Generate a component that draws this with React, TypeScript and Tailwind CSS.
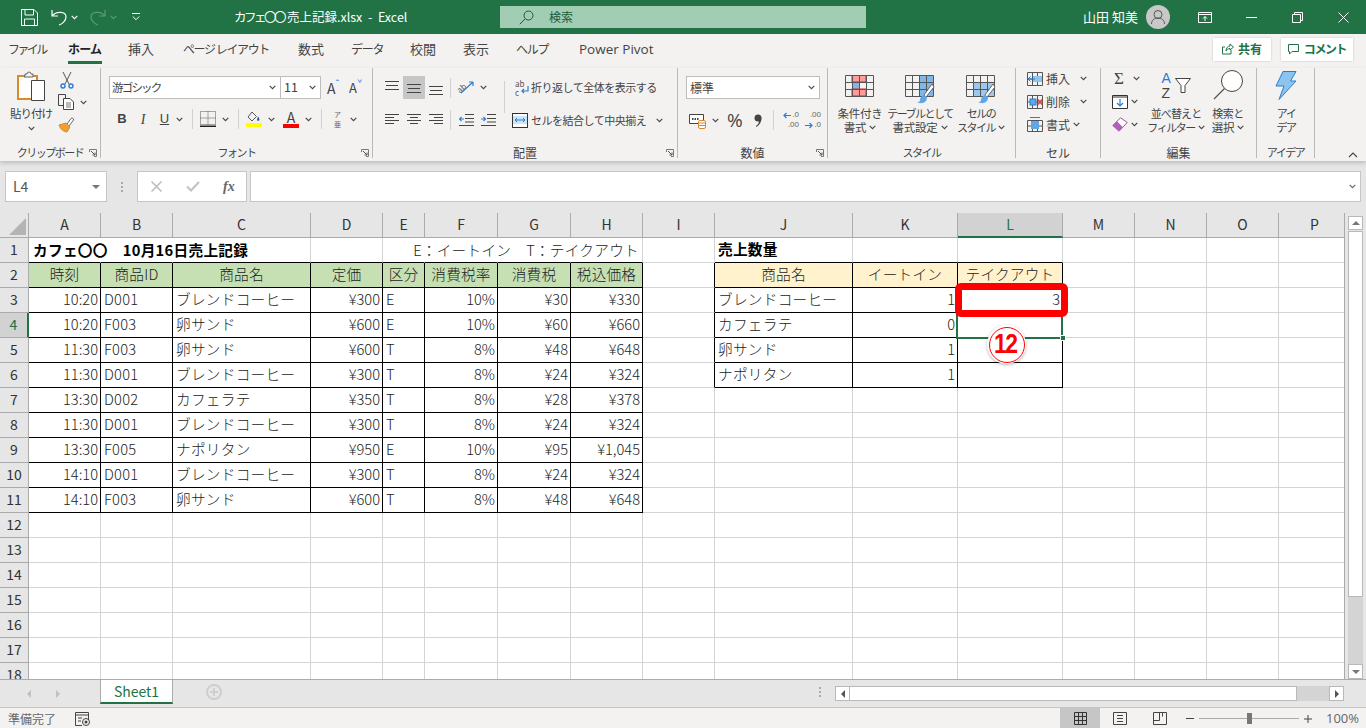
import type { ReactNode } from "react";

const UI = "font-['Noto_Sans_CJK_JP','Noto_Sans',sans-serif]";
const KANA = "text-[11px] tracking-[-1.5px]";
const KANJI = "text-[11.5px] tracking-[-0.2px]";

const Chev = ({ className = "", color = "#444" }: { className?: string; color?: string }) => (
  <svg width="7" height="5" viewBox="0 0 7 5" className={`shrink-0 ${className}`}>
    <path d="M.7.8 3.5 3.6 6.3.8" fill="none" stroke={color} strokeWidth="1.1" />
  </svg>
);

const Launcher = ({ className = "" }: { className?: string }) => (
  <svg width="8" height="8" viewBox="0 0 8 8" className={className}>
    <path d="M.5 3V.5H7.5V7.5H5" fill="none" stroke="#777" />
    <path d="M2 2 6 6M6 3.5V6H3.5" fill="none" stroke="#555" />
  </svg>
);

const VSep = ({ className = "" }: { className?: string }) => <div className={`w-px bg-[#d0d0d0] ${className}`} />;

// horizontal text-line alignment icons
const Lines = ({ rows }: { rows: [number, number, number][] }) => (
  <svg width="14" height="14" viewBox="0 0 14 14">
    {rows.map(([y, x, w], i) => (
      <rect key={i} x={x} y={y} width={w} height="1" fill="#444" />
    ))}
  </svg>
);

const Group = ({ w, label, kana, launcher, children }: { w: string; label: string; kana?: boolean; launcher?: boolean; children: ReactNode }) => (
  <div className={`${w} relative flex h-[90px] shrink-0 flex-col border-r border-[#b9b9b9]`}>
    <div className="h-[77px] shrink-0">{children}</div>
    <div className={`flex h-[15px] shrink-0 items-center justify-center leading-none text-[#444] ${kana ? KANA : "text-[12px]"}`}>{label}</div>
    {launcher && <Launcher className="absolute right-[3px] bottom-[1px]" />}
  </div>
);

const BigBtn = ({ w, icon, l1, l2, k1 = "", k2 = "", chev = true }: { w: string; icon: ReactNode; l1: string; l2: string; k1?: string; k2?: string; chev?: boolean }) => (
  <div className={`${w} flex shrink-0 flex-col items-center`}>
    <div className="flex h-[37px] items-end">{icon}</div>
    <div className="mt-[1px] flex flex-col items-center leading-[14px] whitespace-nowrap text-[#444]">
      <div className={k1}>{l1}</div>
      <div className="flex items-center justify-center gap-[3px]">
        <span className={k2}>{l2}</span>
        {chev && <Chev />}
      </div>
    </div>
  </div>
);

const StyleGridIcon = ({ fill, over }: { fill: ReactNode; over?: ReactNode }) => (
  <svg width="30" height="30" viewBox="0 0 30 30">
    {fill}
    <path d="M.5.5H28.500V21.500H.5ZM.5 7.500H28.500M.5 14.500H28.500M7.500.5V21.500M14.500.5V21.500M21.500.5V21.500" fill="none" stroke="#555" />
    {over}
  </svg>
);

const Brush = () => (
  <>
    <path d="M27 9 19 20l2 2 8-10Z" fill="#fff" stroke="#666" />
    <path d="M19 20c-3 1-4 3-4 5s-2 2-3 2c3 2 10 2 10-5Z" fill="#5ea6e6" />
  </>
);

const colWidths = [72, 72, 138, 72, 42, 73, 73, 72, 72, 138, 105, 105, 72, 72, 72, 72];
const colNames = "ABCDEFGHIJKLMNOP".split("");

type Cell = { t?: string; a?: "l" | "r" | "c"; bg?: string; b?: boolean; bold?: boolean };

const salesRows: string[][] = [
  ["10:20", "D001", "ブレンドコーヒー", "¥300", "E", "10%", "¥30", "¥330"],
  ["10:20", "F003", "卵サンド", "¥600", "E", "10%", "¥60", "¥660"],
  ["11:30", "F003", "卵サンド", "¥600", "T", "8%", "¥48", "¥648"],
  ["11:30", "D001", "ブレンドコーヒー", "¥300", "T", "8%", "¥24", "¥324"],
  ["13:30", "D002", "カフェラテ", "¥350", "T", "8%", "¥28", "¥378"],
  ["11:30", "D001", "ブレンドコーヒー", "¥300", "T", "8%", "¥24", "¥324"],
  ["13:30", "F005", "ナポリタン", "¥950", "E", "10%", "¥95", "¥1,045"],
  ["14:10", "D001", "ブレンドコーヒー", "¥300", "T", "8%", "¥24", "¥324"],
  ["14:10", "F003", "卵サンド", "¥600", "T", "8%", "¥48", "¥648"],
];
const salesHead = ["時刻", "商品ID", "商品名", "定価", "区分", "消費税率", "消費税", "税込価格"];
const sumRows: [string, string, string][] = [
  ["ブレンドコーヒー", "1", "3"],
  ["カフェラテ", "0", ""],
  ["卵サンド", "1", ""],
  ["ナポリタン", "1", ""],
];

// builds the cell map for the sheet: key = row index (0-based), col index
function cellAt(r: number, c: number): Cell {
  if (r === 1) {
    if (c <= 7) return { t: salesHead[c], a: "c", bg: "bg-[#c6e0b4]", b: true };
    if (c >= 9 && c <= 11) return { t: ["商品名", "イートイン", "テイクアウト"][c - 9], a: "c", bg: "bg-[#fff2cc]", b: true };
  }
  if (r >= 2 && r <= 10 && c <= 7) {
    const leftAligned = c === 1 || c === 2 || c === 4;
    return { t: salesRows[r - 2][c], a: leftAligned ? "l" : "r", b: true };
  }
  if (r >= 2 && r <= 5 && c >= 9 && c <= 11) {
    return { t: sumRows[r - 2][c - 9], a: c === 9 ? "l" : "r", b: true };
  }
  if (r === 0 && c === 9) return { t: "売上数量", a: "l", bold: true };
  return {};
}

const Row = ({ r }: { r: number }) => (
  <>
    <div
      className={`flex items-center justify-center border-b border-[#ababab] pb-px text-[14px] ${
        r === 3 ? "border-r-2 border-r-[#217346] bg-[#d2d2d2] text-[#217346]" : "border-r border-r-[#ababab] bg-[#e6e6e6] text-[#333]"
      }`}
    >
      {r + 1}
    </div>
    {colWidths.map((_, c) => {
      const cell = cellAt(r, c);
      const nb = cellAt(r, c + 1);
      const below = cellAt(r + 1, c);
      const rightLine = cell.b || nb.b ? "border-r-black" : r === 0 && c >= 4 && c <= 6 ? "border-r-white" : r === 0 && c < 2 ? "border-r-white" : "border-r-[#d4d4d4]";
      const bottomLine = cell.b || below.b ? "border-b-black" : "border-b-[#d4d4d4]";
      const align = cell.a === "r" ? "justify-end pr-[2px]" : cell.a === "c" ? "justify-center tracking-[0.2px]" : "pl-[3px] tracking-[0.25px]";
      return (
        <div
          key={c}
          className={`flex items-center overflow-visible border-r border-b pb-[2px] text-[14.67px] whitespace-nowrap ${rightLine} ${bottomLine} ${cell.bg ?? ""} ${align} ${
            cell.bold ? "font-bold text-black" : "font-light text-[#222]"
          }`}
        >
          {cell.t}
        </div>
      );
    })}
  </>
);

const Sheet = () => (
  <div className="relative grid h-[466px] auto-rows-[25px] grid-cols-[29px_72px_72px_138px_72px_42px_73px_73px_72px_72px_138px_105px_105px_72px_72px_72px_72px] overflow-hidden bg-white">
    {/* corner */}
    <div className="relative border-r border-b border-[#ababab] bg-[#e6e6e6]">
      <svg width="17" height="17" viewBox="0 0 17 17" className="absolute right-[2px] bottom-[2px]">
        <path d="M17 0V17H0Z" fill="#b4b4b4" />
      </svg>
    </div>
    {colNames.map((n) => (
      <div
        key={n}
        className={`flex items-center justify-center border-r pb-px text-[14px] ${
          n === "L" ? "border-b-2 border-[#ababab] border-b-[#217346] bg-[#d2d2d2] text-[#217346]" : "border-b border-[#ababab] bg-[#e6e6e6] text-[#333]"
        }`}
      >
        {n}
      </div>
    ))}
    {Array.from({ length: 18 }).map((_, r) => (
      <Row key={r} r={r} />
    ))}

    {/* text spilling across the cells of row 1 */}
    <div className="absolute top-[25px] left-[29px] flex h-[24px] w-[353px] items-center pl-[4px] text-[14.67px] font-bold tracking-[0.3px] whitespace-nowrap text-black">
      カフェ〇〇　10月16日売上記録
    </div>
    <div className="absolute top-[25px] left-[383px] flex h-[24px] w-[259px] items-center justify-end pr-[3px] text-[14.67px] font-light tracking-[0.25px] whitespace-nowrap text-[#222]">
      E：イートイン　T：テイクアウト
    </div>

    {/* selected cell L4 */}
    <div className="absolute top-[99px] left-[956px] h-[27px] w-[107px] border-2 border-[#217346]" />
    <div className="absolute top-[122px] left-[1060px] h-[6px] w-[6px] border border-white bg-[#217346]" />

    {/* red highlight + callout */}
    <div className="absolute top-[70px] left-[955px] h-[34px] w-[113px] rounded-[6px] border-[7px] border-[#ff0000]" />
    <div className="absolute top-[112px] left-[987px] flex h-[39px] w-[39px] items-center justify-center rounded-full bg-white shadow-[0_1px_3px_rgba(0,0,0,0.3)]">
      <div className="flex h-[36px] w-[36px] items-center justify-center rounded-full border border-[#f00] font-['Liberation_Sans',sans-serif] text-[27px] font-bold tracking-[-2px] text-[#f00]">
        <span className="scale-x-[0.85] pr-[2px]">12</span>
      </div>
    </div>
  </div>
);

const App = () => (
  <div className={`flex h-[728px] w-[1366px] flex-col overflow-hidden bg-[#e6e6e6] ${UI}`}>
    {/* title bar */}
    <div className="flex h-[34px] shrink-0 items-center bg-[#217346] text-white">
      <svg width="17" height="17" viewBox="0 0 17 17" className="ml-[21px]">
        <path d="M.5.5H13L16.500 4V16.500H.5ZM4 .5V6H12.500V.5M3.500 16.500V10H13.500V16.500" fill="none" stroke="#fff" />
      </svg>
      <svg width="16" height="17" viewBox="0 0 16 17" className="ml-[13px]">
        <path d="M1 1V7H7M1 7C5 2 15 2 15 8c0 4-4 7-7 8" fill="none" stroke="#fff" strokeWidth="1.2" />
      </svg>
      <Chev color="#fff" className="ml-[4px]" />
      <svg width="16" height="17" viewBox="0 0 16 17" className="ml-[12px]">
        <path d="M15 1V7H9M15 7C11 2 1 2 1 8c0 4 4 7 7 8" fill="none" stroke="#5d9a78" strokeWidth="1.2" />
      </svg>
      <Chev color="#5d9a78" className="ml-[4px]" />
      <svg width="8" height="8" viewBox="0 0 8 8" className="ml-[15px]">
        <path d="M0 .5H8M.8 3.500 4 6.700 7.200 3.500" fill="none" stroke="#fff" />
      </svg>
      <div className="ml-[94px] w-[266px] text-[12.5px] whitespace-nowrap">
        <span className="tracking-[-2.5px]">カフェ〇〇</span>
        <span className="ml-[3px]">売上記録.xlsx&nbsp; -&nbsp; Excel</span>
      </div>
      <div className="flex h-[22px] w-[366px] items-center bg-[#a0cdb3] text-[12px] text-[#1d5c3a]">
        <svg width="15" height="15" viewBox="0 0 15 15" className="ml-[19px]">
          <circle cx="9.5" cy="5.5" r="4.5" fill="none" stroke="#1d5c3a" />
          <path d="M6 9 .8 14.200" stroke="#1d5c3a" />
        </svg>
        <span className="ml-[15px]">検索</span>
      </div>
      <div className="ml-[217px] w-[52px] text-[13px] whitespace-nowrap">山田 知美</div>
      <div className="ml-[11px] flex h-[24px] w-[24px] items-center justify-center rounded-full bg-[#c8c8c8]">
        <svg width="16" height="16" viewBox="0 0 16 16">
          <circle cx="8" cy="5.5" r="4" fill="none" stroke="#555" />
          <path d="M1.500 15c0-4 3-6 6.500-6s6.500 2 6.500 6" fill="none" stroke="#555" />
        </svg>
      </div>
      <svg width="14" height="11" viewBox="0 0 14 11" className="ml-[28px]">
        <path d="M.5.5H13.500V10.500H.5ZM.5 2.500H13.500M7 9V4.500M5 6.500 7 4.500 9 6.500" fill="none" stroke="#fff" />
      </svg>
      <div className="ml-[34px] h-px w-[11px] bg-white" />
      <svg width="11" height="11" viewBox="0 0 11 11" className="ml-[35px]">
        <path d="M.5 2.500H8.500V10.500H.5ZM2.500 2.500V.5H10.500V8.500H8.500" fill="none" stroke="#fff" />
      </svg>
      <svg width="11" height="11" viewBox="0 0 11 11" className="ml-[35px]">
        <path d="M.5.5 10.500 10.500M10.500.5.5 10.500" fill="none" stroke="#fff" />
      </svg>
    </div>

    {/* tab row */}
    <div className="flex h-[34px] shrink-0 items-center bg-[#f3f2f1] pb-[4px] text-[13px] whitespace-nowrap text-[#444]">
      <span className="ml-[8px] w-[36px] text-[12px] tracking-[-2.6px]">ファイル</span>
      <span className="relative ml-[24px] w-[34px] text-[12px] font-bold tracking-[-0.8px] text-[#222]">
        ホーム
        <span className="absolute top-[21px] left-0 h-[3px] w-[34px] bg-[#217346]" />
      </span>
      <span className="ml-[26px] w-[26px]">挿入</span>
      <span className="ml-[29px] w-[86px] text-[12px] tracking-[-1.4px]">ページ レイアウト</span>
      <span className="ml-[29px] w-[26px]">数式</span>
      <span className="ml-[27px] w-[32px] text-[12px] tracking-[-1.2px]">データ</span>
      <span className="ml-[27px] w-[26px]">校閲</span>
      <span className="ml-[27px] w-[26px]">表示</span>
      <span className="ml-[27px] w-[32px] text-[12px] tracking-[-1.2px]">ヘルプ</span>
      <span className="ml-[31px] w-[75px] font-['Open_Sans',sans-serif] text-[13.5px]">Power Pivot</span>
      <div className="ml-[559px] flex h-[23px] w-[58px] items-center justify-center gap-[4px] bg-white text-[12px] font-bold text-[#217346] shadow-[0_0_2px_rgba(0,0,0,0.2)]">
        <svg width="12" height="12" viewBox="0 0 12 12">
          <path d="M9 7v4H.5V4H3M4 8c0-3 2-5 4-5V1l3.500 3L8 7V5.500C6 5.500 5 6.500 4 8Z" fill="none" stroke="#217346" />
        </svg>
        共有
      </div>
      <div className="ml-[10px] flex h-[23px] w-[72px] items-center justify-center gap-[5px] bg-white text-[12px] font-bold tracking-[-1.4px] text-[#217346] shadow-[0_0_2px_rgba(0,0,0,0.2)]">
        <svg width="11" height="11" viewBox="0 0 11 11">
          <path d="M.5.5H10.500V7.500H4L1.500 10V7.500H.5Z" fill="none" stroke="#217346" />
        </svg>
        コメント
      </div>
    </div>

    {/* ribbon */}
    <div className="relative flex h-[93px] shrink-0 bg-[#f3f2f1] shadow-[0_2px_4px_rgba(0,0,0,0.18)]">
      <Group w="w-[101px]" label="クリップボード" kana launcher>
        <div className="flex">
          <div className="ml-[10px] flex w-[42px] flex-col items-center leading-[14px] text-[#444]">
            <svg width="28" height="30" viewBox="0 0 28 30" className="mt-[3px]">
              <path d="M1 5H20V28H1Z" fill="#fff" stroke="#d98a2b" strokeWidth="2" />
              <path d="M8 5V3h2a2 2 0 0 1 4 0h2v3H7Z" fill="#f3f2f1" stroke="#666" />
              <path d="M14.500 9.500H27.500V29.500H14.500Z" fill="#fff" stroke="#444" />
            </svg>
            <span className="mt-[5px] text-[11.5px] tracking-[-1px] whitespace-nowrap">貼り付け</span>
            <Chev className="mt-[6px]" />
          </div>
          <div className="ml-[6px] flex flex-col">
            <svg width="16" height="17" viewBox="0 0 16 17" className="mt-[4px] ml-[1px]">
              <path d="M4 0 10 12M12 0 6 12" stroke="#555" fill="none" />
              <circle cx="4" cy="14" r="2" fill="none" stroke="#2b7cd3" strokeWidth="1.400" />
              <circle cx="12" cy="14" r="2" fill="none" stroke="#2b7cd3" strokeWidth="1.400" />
            </svg>
            <div className="mt-[5px] flex items-center gap-[5px]">
              <svg width="17" height="16" viewBox="0 0 17 16">
                <path d="M.5.500H7.500V11.500H.5Z" fill="none" stroke="#444" />
                <path d="M5.500 4.500H12L15.500 8V15.500H5.500Z" fill="#fff" stroke="#444" />
                <path d="M8 9H13M8 11H13M8 13H13" stroke="#777" />
              </svg>
              <Chev />
            </div>
            <svg width="17" height="16" viewBox="0 0 17 16" className="mt-[7px]">
              <path d="M9 7 13 1.500c1-1 3 0 2.500 1.500L11 9Z" fill="#fff" stroke="#666" />
              <path d="M1 8 8 6l4 4-3 5c-3 0-7-3-8-7Z" fill="#f0a032" stroke="#d98a2b" />
            </svg>
          </div>
        </div>
      </Group>

      <Group w="w-[272px]" label="フォント" kana launcher>
        <div className="mt-[8px] flex h-[23px] items-center">
          <div className="ml-[8px] flex h-[23px] w-[172px] items-center justify-between border border-[#bdbdbd] bg-white pr-[4px] pl-[2px] text-[#444]">
            <span className="text-[11.5px] tracking-[-1.8px]">游ゴシック</span>
            <Chev />
          </div>
          <div className="flex h-[23px] w-[40px] items-center justify-between border border-l-0 border-[#bdbdbd] bg-white pr-[4px] pl-[3px] text-[12.5px] text-[#444]">
            11
            <Chev />
          </div>
          <div className="ml-[6px] flex w-[16px] items-start text-[14px] leading-none text-[#444]">
            A<span className="-mt-[2px] text-[9px] text-[#2b7cd3]">ˆ</span>
          </div>
          <div className="ml-[6px] flex w-[16px] items-start text-[13px] leading-none text-[#444]">
            A<span className="-mt-[2px] text-[9px] text-[#2b7cd3]">ˇ</span>
          </div>
        </div>
        <div className="mt-[8px] flex h-[24px] items-center text-[13px] text-[#444]">
          <span className="ml-[15px] w-[12px] text-center font-['Liberation_Sans',sans-serif] font-bold">B</span>
          <span className="ml-[10px] w-[10px] text-center font-['Liberation_Serif',serif] text-[14px] italic">I</span>
          <span className="ml-[11px] w-[11px] text-center font-['Liberation_Sans',sans-serif] underline">U</span>
          <Chev className="ml-[6px]" />
          <VSep className="ml-[9px] h-[20px]" />
          <svg width="16" height="16" viewBox="0 0 16 16" className="ml-[7px]">
            <path d="M.5.500H15.500V13.500H.5ZM8 .5V13.500M.5 7H15.500" fill="none" stroke="#555" strokeDasharray="1 1" />
            <rect y="14.500" width="16" height="1.500" fill="#222" />
          </svg>
          <Chev className="ml-[6px]" />
          <VSep className="ml-[9px] h-[20px]" />
          <div className="ml-[7px] flex w-[16px] flex-col items-center">
            <svg width="14" height="12" viewBox="0 0 14 12">
              <path d="M5 1 1 6l4 4 4.500-4.500Z" fill="none" stroke="#555" />
              <path d="M11 5.500c1 1.500 2 3 1 4s-2 0-2-1Z" fill="#2b579a" />
            </svg>
            <div className="h-[4px] w-[16px] bg-[#ffff00]" />
          </div>
          <Chev className="ml-[6px]" />
          <div className="ml-[8px] flex w-[16px] flex-col items-center leading-none">
            <span className="h-[12px] text-[14px] leading-[12px]">A</span>
            <div className="mt-px h-[4px] w-[16px] bg-[#ff0000]" />
          </div>
          <Chev className="ml-[6px]" />
          <VSep className="ml-[9px] h-[20px]" />
          <div className="ml-[10px] flex w-[11px] flex-col items-center text-[7px] leading-[10px] text-[#666]">
            <span>ア</span>
            <span>亜</span>
          </div>
          <Chev className="ml-[7px]" />
        </div>
      </Group>

      <Group w="w-[305px]" label="配置" launcher>
        <div className="mt-[8px] flex h-[23px] items-center">
          <div className="ml-[12px]">
            <Lines rows={[[0, 0, 14], [4, 1, 12], [8, 0, 14]]} />
          </div>
          <div className="ml-[4px] flex h-[23px] w-[22px] items-center justify-center bg-[#c6c6c6]">
            <Lines rows={[[3, 0, 14], [7, 1, 12], [11, 0, 14]]} />
          </div>
          <div className="ml-[4px]">
            <Lines rows={[[5, 0, 14], [9, 1, 12], [13, 0, 14]]} />
          </div>
          <VSep className="ml-[7px] h-[20px]" />
          <div className="relative ml-[7px] h-[16px] w-[17px] text-[8px] leading-[10px] text-[#555]">
            <span className="block w-[10px] origin-bottom-left translate-x-[3px] translate-y-[5px] -rotate-[40deg]">ab</span>
            <svg width="17" height="16" viewBox="0 0 17 16" className="absolute top-0 left-0">
              <path d="M3 13 15 2M15 2H11M15 2V6" fill="none" stroke="#2b7cd3" strokeWidth="1.200" />
            </svg>
          </div>
          <Chev className="ml-[5px]" />
          <VSep className="ml-[17px] h-[32px] translate-y-[9px]" />
          <div className="relative ml-[10px] flex h-[18px] w-[15px] flex-col text-[8px] leading-[9px] text-[#555]">
            <span>ab</span>
            <span>c</span>
            <svg width="15" height="16" viewBox="0 0 15 16" className="absolute top-[1px] left-0">
              <path d="M13 6V11H7M9 9 7 11 9 13" fill="none" stroke="#2b7cd3" strokeWidth="1.200" />
            </svg>
          </div>
          <span className="ml-[1px] text-[11px] tracking-[-0.5px] whitespace-nowrap text-[#444]">折り返して全体を表示する</span>
        </div>
        <div className="mt-[9px] flex h-[24px] items-center">
          <div className="ml-[12px]">
            <Lines rows={[[1, 0, 14], [4, 0, 9], [7, 0, 14], [10, 0, 9]]} />
          </div>
          <div className="ml-[8px]">
            <Lines rows={[[1, 0, 14], [4, 3, 8], [7, 0, 14], [10, 3, 8]]} />
          </div>
          <div className="ml-[8px]">
            <Lines rows={[[1, 0, 14], [4, 5, 9], [7, 0, 14], [10, 5, 9]]} />
          </div>
          <VSep className="ml-[7px] h-[20px]" />
          <svg width="15" height="12" viewBox="0 0 15 12" className="ml-[8px]">
            <path d="M6 .5H15M6 4.500H15M6 8H15M0 11.500H15" stroke="#444" />
            <path d="M5 5H.5M2.500 3 .5 5 2.500 7" fill="none" stroke="#2b7cd3" strokeWidth="1.200" />
          </svg>
          <svg width="15" height="12" viewBox="0 0 15 12" className="ml-[7px]">
            <path d="M6 .5H15M6 4.500H15M6 8H15M0 11.500H15" stroke="#444" />
            <path d="M0 5H4.500M2.500 3 4.500 5 2.500 7" fill="none" stroke="#2b7cd3" strokeWidth="1.200" />
          </svg>
          <svg width="16" height="15" viewBox="0 0 16 15" className="ml-[16px]">
            <rect x=".5" y=".5" width="15" height="14" fill="#fff" stroke="#333" />
            <rect x="1" y="3" width="14" height="8" fill="#cde6f7" />
            <path d="M3 7H13M5 5 3 7 5 9M11 5 13 7 11 9" fill="none" stroke="#2b7cd3" />
          </svg>
          <span className="ml-[3px] text-[11px] tracking-[-0.5px] whitespace-nowrap text-[#444]">セルを結合して中央揃え</span>
          <Chev className="ml-[10px]" />
        </div>
      </Group>

      <Group w="w-[150px]" label="数値" launcher>
        <div className="mt-[8px] ml-[8px] flex h-[23px] w-[134px] items-center justify-between border border-[#bdbdbd] bg-white pr-[4px] pl-[3px] text-[12px] text-[#444]">
          標準
          <Chev />
        </div>
        <div className="mt-[9px] flex h-[24px] items-center text-[#444]">
          <svg width="18" height="17" viewBox="0 0 18 17" className="ml-[11px]">
            <path d="M.5 2.500H14.500V11.500H.5Z" fill="#fff" stroke="#444" />
            <path d="M3 7H4.500M5.500 7H7M8 7H9.500" stroke="#444" strokeWidth="2" />
            <rect x="9.500" y="8.500" width="7" height="8" rx="1.500" fill="#fff" stroke="#d98a2b" />
            <path d="M9.500 11H16.500M9.500 13.500H16.500" stroke="#d98a2b" />
          </svg>
          <Chev className="ml-[5px]" />
          <span className="ml-[8px] w-[18px] font-['Open_Sans',sans-serif] text-[19px] leading-none">%</span>
          <svg width="8" height="13" viewBox="0 0 8 13" className="ml-[9px]">
            <circle cx="4" cy="4" r="3.500" fill="#444" />
            <path d="M7.500 4c0 4-2 7-5 9l-.6-1c2-1 3-3 3-5Z" fill="#444" />
          </svg>
          <VSep className="ml-[11px] h-[20px]" />
          <div className="ml-[7px] flex w-[18px] flex-col font-['Liberation_Sans',sans-serif] text-[8px] leading-[10px] text-[#666]">
            <span className="flex items-center justify-end">
              <svg width="8" height="7" viewBox="0 0 8 7" className="mr-[1px]">
                <path d="M8 3.500H1M3.500 1 1 3.500 3.500 6" fill="none" stroke="#2b7cd3" strokeWidth="1.200" />
              </svg>
              .0
            </span>
            <span className="text-right">.00</span>
          </div>
          <div className="ml-[4px] flex w-[18px] flex-col font-['Liberation_Sans',sans-serif] text-[8px] leading-[10px] text-[#666]">
            <span className="text-right">.00</span>
            <span className="flex items-center justify-end">
              <svg width="8" height="7" viewBox="0 0 8 7" className="mr-[1px]">
                <path d="M0 3.500H7M4.500 1 7 3.500 4.500 6" fill="none" stroke="#2b7cd3" strokeWidth="1.200" />
              </svg>
              .0
            </span>
          </div>
        </div>
      </Group>

      <Group w="w-[188px]" label="スタイル" kana>
        <div className="flex pl-[2px]">
          <BigBtn
            w="w-[60px]"
            l1="条件付き"
            l2="書式"
            k1={KANJI}
            k2={KANJI}
            icon={
              <StyleGridIcon
                fill={
                  <>
                    <rect x="7" y="0" width="14" height="7" fill="#ff9c9c" stroke="#d22" />
                    <rect x="7" y="7" width="7" height="7" fill="#7fb8e8" />
                    <rect x="7" y="14" width="14" height="7" fill="#ff9c9c" stroke="#d22" />
                  </>
                }
              />
            }
          />
          <BigBtn
            w="w-[60px]"
            l1="テーブルとして"
            l2="書式設定"
            k1={KANA}
            k2={KANJI}
            icon={<StyleGridIcon fill={<rect x="14" y="0" width="14" height="21" fill="#7fb8e8" />} over={<Brush />} />}
          />
          <BigBtn
            w="w-[62px]"
            l1="セルの"
            l2="スタイル"
            k1={KANA}
            k2={KANA}
            icon={<StyleGridIcon fill={<rect x="7" y="7" width="21" height="14" fill="#9cc8f0" />} over={<Brush />} />}
          />
        </div>
      </Group>

      <Group w="w-[85px]" label="セル">
        <div className="-mt-[1px] flex flex-col pl-[11px] text-[12px] leading-none text-[#444]">
          <div className="flex h-[23px] items-center">
            <svg width="16" height="14" viewBox="0 0 16 14">
              <path d="M.5.500H15.500V13.500H.5ZM.5 7H15.500M5.500.5V13.500M10.500.5V13.500" fill="none" stroke="#555" />
              <rect x="6" y="4" width="9" height="6" fill="#8cc4ee" />
              <path d="M8 7H1M3.500 4.500 1 7 3.500 9.500" fill="none" stroke="#2b7cd3" />
            </svg>
            <span className="ml-[3px] w-[24px]">挿入</span>
            <Chev className="ml-[10px]" />
          </div>
          <div className="flex h-[23px] items-center">
            <svg width="16" height="14" viewBox="0 0 16 14">
              <path d="M.5.500H15.500V13.500H.5ZM.5 7H15.500M5.500.5V13.500M10.500.5V13.500" fill="none" stroke="#555" />
              <rect x="3" y="4" width="6" height="6" fill="#5ea6e6" stroke="#2b7cd3" />
              <path d="M11 4.500 15 9.500M15 4.500 11 9.500" stroke="#e83b3b" strokeWidth="1.400" />
            </svg>
            <span className="ml-[3px] w-[24px]">削除</span>
            <Chev className="ml-[10px]" />
          </div>
          <div className="flex h-[23px] items-center">
            <svg width="16" height="15" viewBox="0 0 16 15">
              <path d="M.5 3.500H15.500V14.500H.5ZM.5 9H15.500M5.500 3.500V14.500M10.500 3.500V14.500" fill="none" stroke="#555" />
              <rect x="4" y="4" width="8" height="8" fill="#5ea6e6" />
              <path d="M3 .5H13" stroke="#2b7cd3" />
            </svg>
            <span className="ml-[3px] w-[24px]">書式</span>
            <Chev className="ml-[3px]" />
          </div>
        </div>
      </Group>

      <Group w="w-[156px]" label="編集">
        <div className="flex">
          <div className="-mt-[1px] flex w-[50px] flex-col pl-[11px]">
            <div className="flex h-[23px] items-center">
              <span className="w-[15px] pl-[2px] font-['Liberation_Serif',serif] text-[17px] leading-none text-[#444]">Σ</span>
              <Chev className="ml-[6px]" />
            </div>
            <div className="flex h-[23px] items-center">
              <svg width="16" height="14" viewBox="0 0 16 14">
                <path d="M.5.500H15.500V13.500H.5Z" fill="#fff" stroke="#333" />
                <path d="M.5 2H15.500" stroke="#333" />
                <path d="M8 4V11M5 8 8 11 11 8" fill="none" stroke="#2b7cd3" strokeWidth="1.200" />
              </svg>
              <Chev className="ml-[3px]" />
            </div>
            <div className="flex h-[23px] items-center">
              <svg width="16" height="15" viewBox="0 0 16 15">
                <path d="M.8 8.500 8.500.8 15.200 5.500 7 14.200Z" fill="#fff" stroke="#a349a4" />
                <path d="M.8 8.500 5 4.300 11 10.500 7 14.200Z" fill="#b55bc0" />
              </svg>
              <Chev className="ml-[3px]" />
            </div>
          </div>
          <BigBtn
            w="w-[50px]"
            l1="並べ替えと"
            l2="フィルター"
            k1="text-[11px] tracking-[-0.9px]"
            k2={KANA}
            icon={
              <div className="mb-[5px] flex h-[29px] w-[29px] items-start">
                <div className="flex w-[13px] flex-col font-['Liberation_Sans',sans-serif] text-[14px] leading-[15px]">
                  <span className="text-[#2b7cd3]">A</span>
                  <span className="text-[#444]">Z</span>
                </div>
                <svg width="16" height="16" viewBox="0 0 16 16" className="mt-[7px]">
                  <path d="M.5.500H15.500L10 7.500V14.500H6V7.500Z" fill="#fff" stroke="#444" />
                </svg>
              </div>
            }
          />
          <BigBtn
            w="w-[54px]"
            l1="検索と"
            l2="選択"
            k1="text-[11px] tracking-[-0.5px]"
            k2={KANJI}
            icon={
              <svg width="30" height="30" viewBox="0 0 30 30" className="mb-[5px]">
                <circle cx="19" cy="11" r="10.500" fill="#fff" stroke="#444" />
                <path d="M11.500 18.500 1 29" stroke="#555" strokeWidth="1.200" />
              </svg>
            }
          />
        </div>
      </Group>

      <Group w="w-[58px]" label="アイデア" kana>
        <BigBtn
          w="w-[58px]"
          l1="アイ"
          l2="デア"
          k1={KANA}
          k2={KANA}
          chev={false}
          icon={
            <svg width="22" height="29" viewBox="0 0 22 29" className="mb-[5px]">
              <path d="M8 .5H21L15.500 10H21L4 28.500 9 15H1Z" fill="#8cc4ee" stroke="#2b7cd3" />
            </svg>
          }
        />
      </Group>
      <svg width="10" height="6" viewBox="0 0 10 6" className="absolute top-[84px] right-[8px]">
        <path d="M1 5 5 1 9 5" fill="none" stroke="#444" strokeWidth="1.100" />
      </svg>
    </div>

    {/* formula bar */}
    <div className="flex h-[52px] shrink-0 items-start pt-[10px]">
      <div className="ml-[5px] flex h-[31px] w-[102px] items-center justify-between border border-[#c6c6c6] bg-white pr-[6px] pl-[7px] text-[14px] text-[#555]">
        L4
        <div className="h-0 w-0 border-x-[4px] border-t-[4px] border-x-transparent border-t-[#777]" />
      </div>
      <div className="ml-[14px] flex h-[31px] w-[3px] flex-col justify-center gap-[2px]">
        <div className="h-[2px] w-[2px] bg-[#aaa]" />
        <div className="h-[2px] w-[2px] bg-[#aaa]" />
        <div className="h-[2px] w-[2px] bg-[#aaa]" />
      </div>
      <div className="ml-[13px] flex h-[31px] w-[110px] items-center border border-[#c6c6c6] bg-white">
        <svg width="11" height="11" viewBox="0 0 11 11" className="ml-[13px]">
          <path d="M.5.500 10.500 10.500M10.500.500.5 10.500" stroke="#bbb" strokeWidth="1.500" />
        </svg>
        <svg width="14" height="11" viewBox="0 0 14 11" className="ml-[24px]">
          <path d="M1 5.500 5 9.500 13 1" fill="none" stroke="#c4c4c4" strokeWidth="2.200" />
        </svg>
        <span className="ml-[23px] font-['Liberation_Serif',serif] text-[14px] font-bold text-[#666] italic">fx</span>
      </div>
      <div className="ml-[3px] flex h-[31px] w-[1111px] items-center justify-end border border-[#c6c6c6] bg-white pr-[4px]">
        <Chev color="#666" />
      </div>
    </div>

    {/* grid + vertical scrollbar */}
    <div className="flex h-[466px] shrink-0">
      <div className="w-[1345px] shrink-0 border-r border-[#ababab]">
        <Sheet />
      </div>
      <div className="ml-[3px] flex h-[466px] w-[15px] flex-col">
        <div className="mt-[3px] flex h-[14px] shrink-0 items-center justify-center border border-[#b9b9b9] bg-white">
          <div className="h-0 w-0 border-x-[4px] border-b-[4px] border-x-transparent border-b-[#777]" />
        </div>
        <div className="mt-[1px] h-[366px] shrink-0 border border-[#b9b9b9] bg-white" />
        <div className="flex-1 bg-[#d4d4d4]" />
        <div className="flex h-[15px] shrink-0 items-center justify-center border border-[#b9b9b9] bg-white">
          <div className="h-0 w-0 border-x-[4px] border-t-[4px] border-x-transparent border-t-[#777]" />
        </div>
      </div>
    </div>

    {/* sheet tabs + horizontal scrollbar */}
    <div className="flex h-[28px] shrink-0 items-start border-t border-[#ababab] bg-[#e6e6e6]">
      <div className="mt-[10px] ml-[27px] h-0 w-0 border-y-[4px] border-r-[4px] border-y-transparent border-r-[#c0c0c0]" />
      <div className="mt-[10px] ml-[25px] h-0 w-0 border-y-[4px] border-l-[4px] border-y-transparent border-l-[#c0c0c0]" />
      <div className="ml-[40px] flex h-[24px] w-[73px] items-center justify-center border-x border-b-2 border-x-[#ababab] border-b-[#217346] bg-white text-[14px] text-[#217346]">
        Sheet1
      </div>
      <div className="mt-[4px] ml-[33px] flex h-[16px] w-[16px] items-center justify-center rounded-full border-2 border-[#cfcfcf]">
        <svg width="8" height="8" viewBox="0 0 8 8">
          <path d="M4 0V8M0 4H8" stroke="#cfcfcf" strokeWidth="2" />
        </svg>
      </div>
      <div className="mt-[7px] ml-[597px] flex w-[3px] flex-col gap-[2px]">
        <div className="h-[2px] w-[2px] bg-[#aaa]" />
        <div className="h-[2px] w-[2px] bg-[#aaa]" />
        <div className="h-[2px] w-[2px] bg-[#aaa]" />
      </div>
      <div className="mt-[6px] ml-[13px] flex h-[15px] w-[15px] items-center justify-center border border-[#b9b9b9] bg-white">
        <div className="h-0 w-0 border-y-[4px] border-r-[4px] border-y-transparent border-r-[#555]" />
      </div>
      <div className="mt-[6px] h-[15px] w-[447px] border-y border-r border-[#b9b9b9] bg-white" />
      <div className="mt-[6px] h-[15px] w-[32px] bg-[#d4d4d4]" />
      <div className="mt-[6px] flex h-[15px] w-[15px] items-center justify-center border border-[#b9b9b9] bg-white">
        <div className="h-0 w-0 border-y-[4px] border-l-[4px] border-y-transparent border-l-[#555]" />
      </div>
    </div>

    {/* status bar */}
    <div className="flex h-[22px] shrink-0 items-center border-t border-[#c6c6c6] bg-[#f3f2f1] text-[12px] text-[#666]">
      <span className="ml-[8px] w-[48px] whitespace-nowrap">準備完了</span>
      <svg width="15" height="14" viewBox="0 0 15 14" className="ml-[19px]">
        <path d="M.5.500H13.500V8M.5.500V13.500H7M.5 3H13.500M3 6H7M3 9H6" fill="none" stroke="#444" />
        <circle cx="11" cy="10" r="3.500" fill="none" stroke="#444" />
        <circle cx="11" cy="10" r="1.500" fill="#444" />
      </svg>
      <div className="ml-[970px] flex h-[21px] w-[40px] items-center justify-center bg-[#c6c6c6]">
        <svg width="13" height="13" viewBox="0 0 13 13">
          <path d="M.5.500H12.500V12.500H.5ZM4.500.5V12.500M8.500.5V12.500M.5 4.500H12.500M.5 8.500H12.500" fill="none" stroke="#333" />
        </svg>
      </div>
      <div className="flex h-[21px] w-[40px] items-center justify-center">
        <svg width="14" height="13" viewBox="0 0 14 13">
          <path d="M.5.500H13.500V12.500H.5ZM4 3.500H10M4 6.500H10M4 9.500H10" fill="none" stroke="#444" />
        </svg>
      </div>
      <div className="flex h-[21px] w-[40px] items-center justify-center">
        <svg width="14" height="13" viewBox="0 0 14 13">
          <path d="M.5.500H13.500V12.500H.5ZM.5 8.500H6.500V.5M9.500.5V4.500" fill="none" stroke="#444" />
        </svg>
      </div>
      <div className="ml-[6px] h-px w-[8px] bg-[#444]" />
      <div className="relative ml-[5px] flex h-[12px] w-[100px] items-center">
        <div className="h-px w-full bg-[#aaa]" />
        <div className="absolute left-[48px] h-[11px] w-[5px] bg-[#777]" />
      </div>
      <svg width="8" height="8" viewBox="0 0 8 8" className="ml-[5px]">
        <path d="M4 0V8M0 4H8" stroke="#444" />
      </svg>
      <span className="ml-[14px] font-['Open_Sans',sans-serif] text-[13px] whitespace-nowrap">100%</span>
    </div>
  </div>
);

export default App;
